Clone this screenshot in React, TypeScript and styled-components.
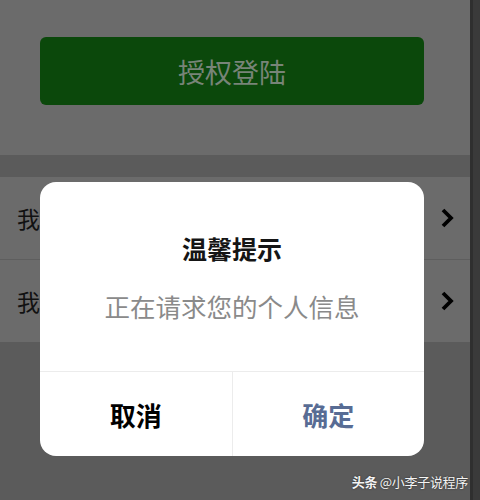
import styled, { createGlobalStyle } from 'styled-components';

const GlobalStyle = createGlobalStyle`
  html, body {
    margin: 0;
    padding: 0;
    background: #5b5b5b;
    font-family: "Noto Sans CJK SC", "Liberation Sans", sans-serif;
  }
`;

const Screen = styled.div`
  position: relative;
  display: flex;
  width: 480px;
  height: 500px;
  overflow: hidden;
  background: #5b5b5b;
`;

const Page = styled.div`
  width: 470px;
  display: flex;
  flex-direction: column;
`;

const Scrollbar = styled.div`
  width: 10px;
  background: #3a3a3a;
  border-left: 3px solid #2f2f2f;
  box-sizing: border-box;
`;

const LoginArea = styled.div`
  background: #6b6b6b;
  padding: 37px 46px 50px 40px;
`;

const LoginButton = styled.div`
  height: 68px;
  border-radius: 6px;
  background: #0b480b;
  color: #788478;
  font-size: 27px;
  display: flex;
  align-items: center;
  justify-content: center;
`;

const Gap = styled.div`
  height: 22px;
  background: #5b5b5b;
`;

const List = styled.div`
  display: flex;
  flex-direction: column;
  background: #6b6b6b;
`;

const Row = styled.div<{ $last?: boolean }>`
  height: 82px;
  display: flex;
  align-items: center;
  justify-content: space-between;
  padding: 0 15px 0 17px;
  border-bottom: ${p => (p.$last ? 'none' : '1px solid #5e5e5e')};
  color: #111;
  font-size: 23px;
`;

const Arrow = () => (
  <svg width="16" height="22" viewBox="0 0 16 22">
    <path d="M4 3 L12 11 L4 19" fill="none" stroke="#000" strokeWidth="3.8" />
  </svg>
);

const Dialog = styled.div`
  position: absolute;
  left: 40px;
  top: 182px;
  width: 384px;
  height: 274px;
  border-radius: 16px;
  background: #fff;
  display: flex;
  flex-direction: column;
  overflow: hidden;
`;

const DialogBody = styled.div`
  flex: 1;
  display: flex;
  flex-direction: column;
  align-items: center;
  padding-top: 48px;
  gap: 22px;
`;

const Title = styled.div`
  font-size: 25px;
  font-weight: 700;
  color: #151515;
  line-height: 36px;
`;

const Message = styled.div`
  font-size: 25.5px;
  color: #8a8a8a;
  line-height: 36px;
`;

const Actions = styled.div`
  height: 84px;
  display: flex;
  border-top: 1px solid #ececec;
`;

const Action = styled.div<{ $primary?: boolean }>`
  flex: 1;
  display: flex;
  align-items: center;
  justify-content: center;
  font-size: 26px;
  font-weight: 700;
  color: ${p => (p.$primary ? '#586c94' : '#000')};
  & + & {
    border-left: 1px solid #ececec;
  }
`;

const Watermark = styled.div`
  position: absolute;
  right: 12px;
  bottom: 9px;
  font-size: 13px;
  letter-spacing: -0.3px;
  color: #f4f4f4;
  text-shadow: 0 0 2px rgba(0, 0, 0, 0.6);
`;

export default function App() {
  return (
    <>
      <GlobalStyle />
      <Screen>
        <Page>
          <LoginArea>
            <LoginButton>授权登陆</LoginButton>
          </LoginArea>
          <Gap />
          <List>
            <Row>
              <span>我的信息</span>
              <Arrow />
            </Row>
            <Row $last>
              <span>我的设置</span>
              <Arrow />
            </Row>
          </List>
        </Page>
        <Scrollbar />
        <Dialog>
          <DialogBody>
            <Title>温馨提示</Title>
            <Message>正在请求您的个人信息</Message>
          </DialogBody>
          <Actions>
            <Action>取消</Action>
            <Action $primary>确定</Action>
          </Actions>
        </Dialog>
        <Watermark>
          <b>头条</b> @小李子说程序
        </Watermark>
      </Screen>
    </>
  );
}
